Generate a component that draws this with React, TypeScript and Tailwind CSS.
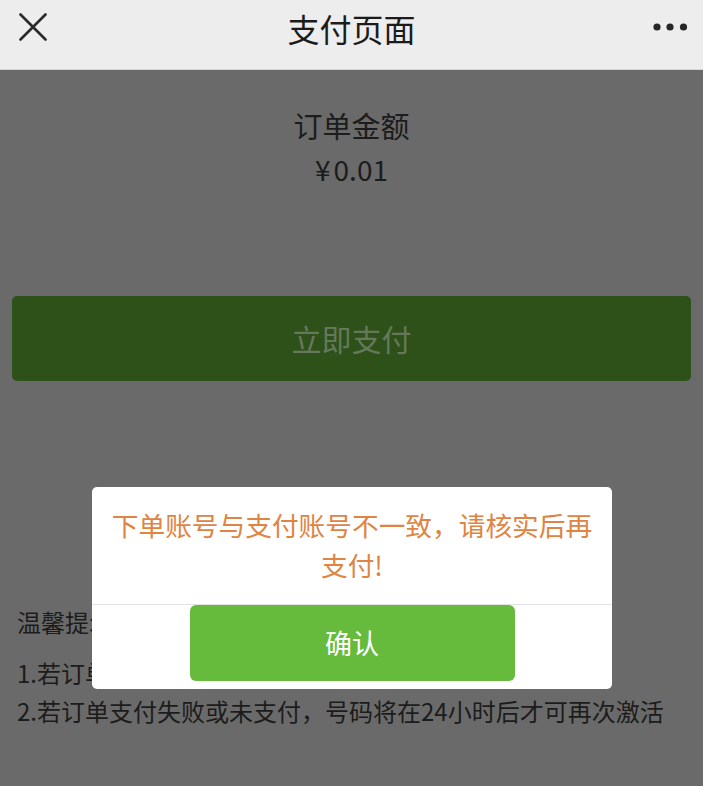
import React from "react";

export default function App() {
  const font = { fontFamily: '"Noto Sans CJK SC", "Noto Sans", sans-serif' };
  return (
    <div className="relative w-[703px] h-[786px] overflow-hidden bg-[#6a6a6a]" style={font}>
      {/* Header */}
      <div className="relative flex items-center justify-center h-[70px] bg-[#ededed] border-b border-[#d6d6d6]">
        <svg className="absolute left-[19px] top-[13px]" width="28" height="28" viewBox="0 0 28 28">
          <path d="M1.5 1.5 L26.5 26.5 M26.5 1.5 L1.5 26.5" stroke="#2a2a2a" strokeWidth="2.6" strokeLinecap="round" />
        </svg>
        <span className="text-[32px] leading-[40px] text-[#1b1b1b] -mt-[14px]">支付页面</span>
        <svg className="absolute left-[650px] top-[20px]" width="40" height="14" viewBox="0 0 40 14">
          <circle cx="7" cy="7" r="3.6" fill="#262626" />
          <circle cx="20" cy="7" r="3.6" fill="#262626" />
          <circle cx="33.5" cy="7" r="3.6" fill="#262626" />
        </svg>
      </div>

      {/* Content (dimmed by mask) */}
      <div className="flex flex-col">
        <div className="flex flex-col items-center pt-[35px]">
          <div className="text-[29px] leading-[40px] text-[#1c1c1c]">订单金额</div>
          <div className="text-[28px] leading-[40px] text-[#1c1c1c] mt-[4px] flex items-baseline">
            <span className="mr-[3px]">¥</span>
            <span>0.01</span>
          </div>
        </div>
        <div className="mx-[12px] mt-[107px] h-[85px] rounded-[5px] bg-[#2d5119] flex items-center justify-center">
          <span className="text-[30px] text-[#66785b]">立即支付</span>
        </div>
        <div className="px-[17px] mt-[223px] text-[24px] text-[#1c1c1c]">
          <div className="leading-[36px]">温馨提示：</div>
          <div className="leading-[36px] mt-[15px]">1.若订单支付成功，号码将在5分钟内激活</div>
          <div className="leading-[36px] mt-[2px]">2.若订单支付失败或未支付，号码将在24小时后才可再次激活</div>
        </div>
      </div>

      {/* Dialog */}
      <div className="absolute left-[92px] top-[487px] w-[520px] h-[202px] bg-white rounded-[5px] flex flex-col">
        <div className="px-[18px] pt-[18px] pb-[19px] text-center text-[26.7px] leading-[40px] text-[#e08443] border-b border-[#e3e3e3]">
          下单账号与支付账号不一致，请核实后再支付!
        </div>
        <div className="flex justify-center">
          <button className="w-[325px] h-[76px] rounded-[6px] bg-[#67bb3c] text-white text-[27px]">确认</button>
        </div>
      </div>
    </div>
  );
}
